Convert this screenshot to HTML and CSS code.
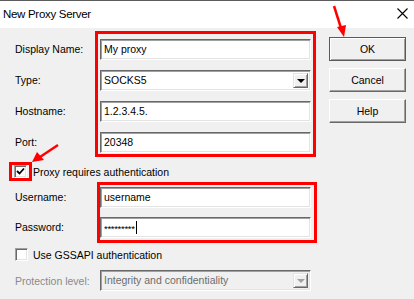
FILE: index.html
```html
<!DOCTYPE html>
<html>
<head>
  <meta charset="UTF-8">
  <title>New Proxy Server</title>
  <link rel="stylesheet" href="styles.css">
</head>
<body>
  <div class="window">
    <div class="titlebar">
      <span class="title">New Proxy Server</span>
      <svg class="close" width="11" height="11" viewBox="0 0 11 11">
        <path d="M0.5 0.5 L10.5 10.5 M10.5 0.5 L0.5 10.5" stroke="#000" stroke-width="1.1" fill="none"/>
      </svg>
    </div>
    <div class="client">
      <div class="form">
        <div class="group server">
          <div class="labels">
            <label>Display Name:</label>
            <label>Type:</label>
            <label>Hostname:</label>
            <label>Port:</label>
          </div>
          <div class="redbox">
            <div class="edit">My proxy</div>
            <div class="edit combo">SOCKS5<span class="drop"><span class="arrow"></span></span></div>
            <div class="edit">1.2.3.4.5.</div>
            <div class="edit">20348</div>
          </div>
        </div>

        <div class="check-row auth">
          <span class="redcheck">
            <span class="checkbox">
              <svg width="9" height="9" viewBox="0 0 9 9">
                <path d="M1 4 L3.5 6.5 L8 1.5" stroke="#000" stroke-width="1.8" fill="none"/>
              </svg>
            </span>
          </span>
          <span>Proxy requires authentication</span>
        </div>

        <div class="group login">
          <div class="labels">
            <label>Username:</label>
            <label>Password:</label>
          </div>
          <div class="redbox">
            <div class="edit">username</div>
            <div class="edit secret"><span class="stars">*********</span><span class="caret"></span></div>
          </div>
        </div>

        <div class="check-row gss">
          <span class="checkbox"></span>
          <span>Use GSSAPI authentication</span>
        </div>

        <div class="field-row disabled">
          <label>Protection level:</label>
          <div class="edit combo">Integrity and confidentiality<span class="drop"><span class="arrow"></span></span></div>
        </div>
      </div>

      <div class="buttons">
        <button class="btn default">OK</button>
        <button class="btn">Cancel</button>
        <button class="btn">Help</button>
      </div>
    </div>

    <svg class="marks" width="414" height="299" viewBox="0 0 414 299">
      <line x1="334" y1="6" x2="341" y2="28" stroke="#f00" stroke-width="2.5"/>
      <polygon points="337,27 346,25 344,37" fill="#f00"/>
      <line x1="58" y1="145" x2="40" y2="157" stroke="#f00" stroke-width="2.5"/>
      <polygon points="37,152 44,160 32,162" fill="#f00"/>
    </svg>
  </div>
</body>
</html>
```

FILE: styles.css
```css
html, body {
  margin: 0;
  padding: 0;
  overflow: hidden;
}

body {
  font-family: "Liberation Sans", Arial, sans-serif;
  font-size: 10.5px;
  color: #000;
  background-color: #f0f0f0;
}

.window {
  position: relative;
  width: 414px;
  height: 299px;
}

.titlebar {
  height: 27px;
  background-color: #fff;
  border-top: 1px solid #5c5c5c;
  display: flex;
  align-items: center;
  justify-content: space-between;
  padding: 0 6px 0 3px;
}

.title {
  font-size: 11.5px;
  letter-spacing: -0.3px;
  margin-top: -1px;
}

.close {
  margin-top: -2px;
}

.client {
  display: flex;
  background-color: #f0f0f0;
}

.form {
  width: 317px;
}

.group {
  display: flex;
}

.labels {
  display: flex;
  flex-direction: column;
  padding-left: 15px;
  box-sizing: border-box;
}

.labels label {
  height: 21px;
  line-height: 21px;
}

.redbox {
  border: 3px solid #f00;
  display: flex;
  flex-direction: column;
}

/* first red box */
.server {
  margin-top: 3px;
}
.server .labels {
  width: 95px;
  padding-top: 8px;
  gap: 10px;
}
.server .redbox {
  padding: 5px 2px 1px 2px;
  gap: 10px;
}

/* second red box */
.login {
  margin-top: 1px;
}
.login .labels {
  width: 97px;
  padding-top: 5px;
  gap: 9px;
}
.login .redbox {
  padding: 2px 3px 2px 0;
  gap: 9px;
}

.edit {
  position: relative;
  width: 211px;
  height: 21px;
  box-sizing: border-box;
  background-color: #fff;
  border-top: 1px solid #696969;
  border-left: 1px solid #696969;
  border-right: 1px solid #fff;
  border-bottom: 1px solid #fff;
  box-shadow: inset 1px 1px 0 #a0a0a0, inset -1px -1px 0 #e3e3e3;
  padding-left: 3px;
  line-height: 19px;
  white-space: nowrap;
  overflow: hidden;
}

.combo .drop {
  position: absolute;
  top: 2px;
  right: 2px;
  width: 15px;
  height: 15px;
  box-sizing: border-box;
  background-color: #f0f0f0;
  border-top: 1px solid #e3e3e3;
  border-left: 1px solid #e3e3e3;
  border-right: 1px solid #696969;
  border-bottom: 1px solid #696969;
  box-shadow: inset 1px 1px 0 #fff, inset -1px -1px 0 #a0a0a0;
  display: flex;
  align-items: center;
  justify-content: center;
}

.combo .arrow {
  width: 0;
  height: 0;
  border-left: 4px solid transparent;
  border-right: 4px solid transparent;
  border-top: 4px solid #000;
  margin-top: 1px;
}

.secret {
  display: flex;
  align-items: center;
}

.stars {
  font-size: 9.5px;
  letter-spacing: -0.3px;
  line-height: 9px;
  margin-top: 1px;
}

.caret {
  width: 1px;
  height: 13px;
  background-color: #000;
  margin-left: 1px;
}

.check-row {
  display: flex;
  align-items: center;
}

.checkbox {
  width: 13px;
  height: 13px;
  box-sizing: border-box;
  background-color: #fff;
  border-top: 1px solid #a0a0a0;
  border-left: 1px solid #a0a0a0;
  border-right: 1px solid #fff;
  border-bottom: 1px solid #fff;
  box-shadow: inset 1px 1px 0 #696969, inset -1px -1px 0 #e3e3e3;
  display: flex;
  align-items: center;
  justify-content: center;
}

.auth {
  margin-top: 5px;
  height: 19px;
}

.redcheck {
  margin-left: 9px;
  margin-right: 1px;
  border: 3px solid #f00;
  padding: 0 2px;
  height: 13px;
}

.gss {
  margin-top: 5px;
  height: 13px;
}

.gss .checkbox {
  margin-left: 15px;
  margin-right: 5px;
}

.field-row {
  display: flex;
  align-items: center;
  margin-top: 9px;
}

.field-row label {
  width: 100px;
  padding-left: 15px;
  box-sizing: border-box;
}

.disabled label {
  color: #8a8a8a;
}

.disabled .edit {
  background-color: #f0f0f0;
  color: #6d6d6d;
}

.disabled .arrow {
  border-top-color: #a0a0a0;
}

.buttons {
  display: flex;
  flex-direction: column;
  gap: 7px;
  margin-left: 12px;
  padding-top: 9px;
}

.btn {
  width: 77px;
  height: 24px;
  font-family: "Liberation Sans", Arial, sans-serif;
  font-size: 10.5px;
  color: #000;
  background-color: #f0f0f0;
  border-top: 1px solid #fff;
  border-left: 1px solid #fff;
  border-right: 1px solid #696969;
  border-bottom: 1px solid #696969;
  box-shadow: inset -1px -1px 0 #a0a0a0;
  padding: 0;
}

.btn.default {
  border: 1px solid #5a5a5a;
  box-shadow: inset 1px 1px 0 #fff, inset -1px -1px 0 #a0a0a0;
}

.marks {
  position: absolute;
  left: 0;
  top: 0;
  pointer-events: none;
}
```
